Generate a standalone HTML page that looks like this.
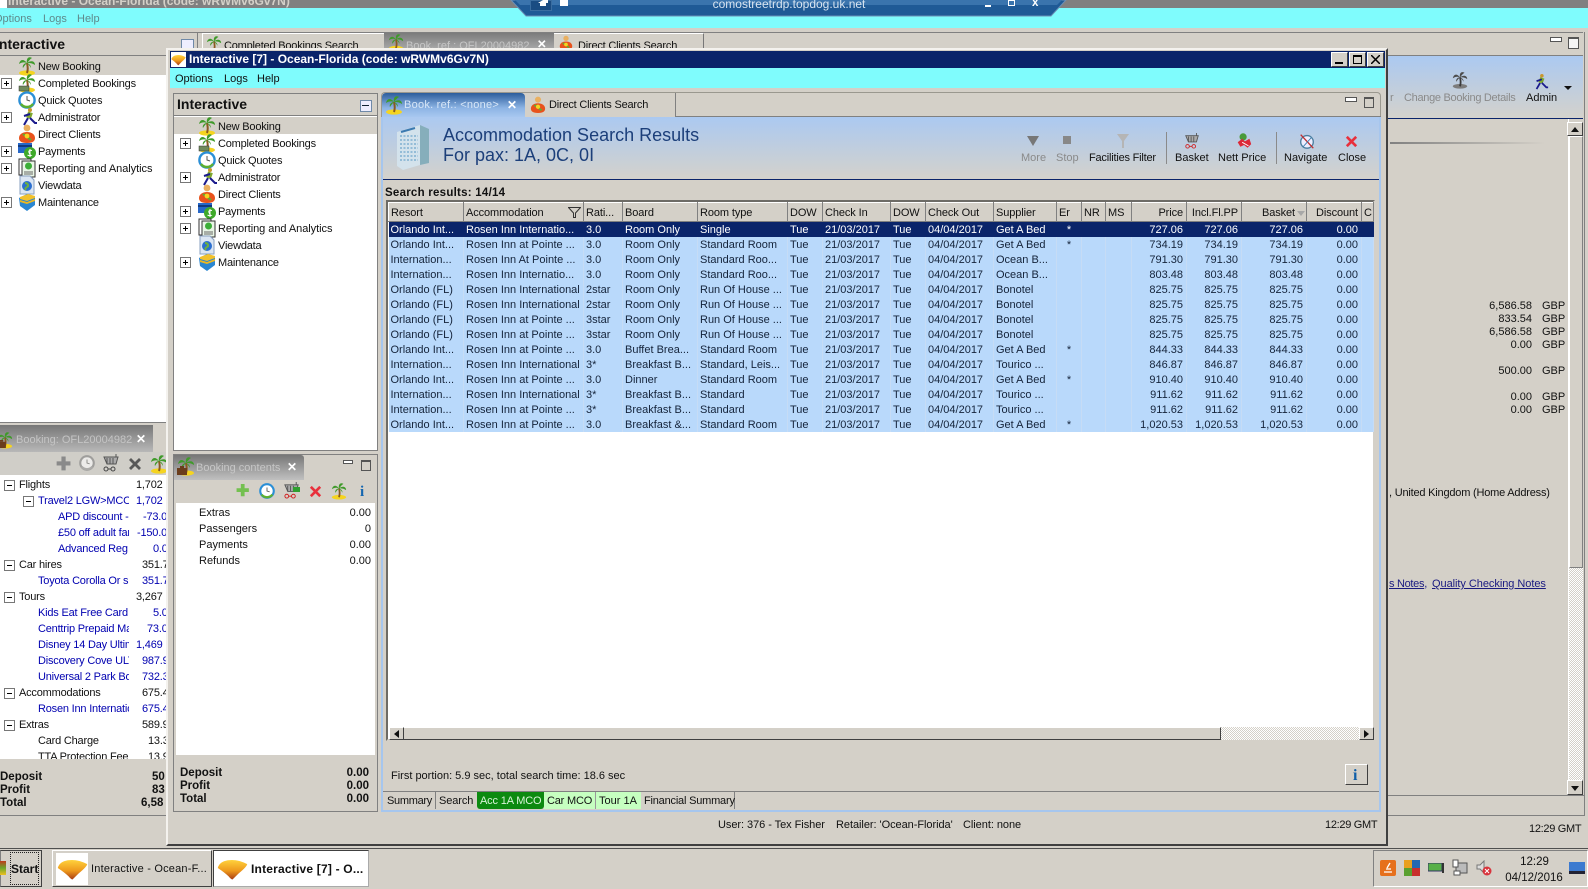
<!DOCTYPE html>
<html><head><meta charset="utf-8"><title>Interactive</title>
<style>
html,body{margin:0;padding:0;background:#d4d0c8}
#p{position:relative;width:1588px;height:889px;overflow:hidden;background:#d4d0c8;font:11px/14px "Liberation Sans",sans-serif;color:#111}
#p div,#p svg,#p table{position:absolute}
.t{white-space:nowrap;height:14px;margin-top:1px}
.b{font-weight:bold;font-size:11.5px}
.r{text-align:right}
.bl{color:#0000b0}
.gr{color:#8a8a8a}
.x{width:9px;height:9px;background:#fff;border:1px solid #777;box-sizing:content-box}
.x:before{content:"";position:absolute;left:2px;top:4px;width:5px;height:1px;background:#000}
.pl:after{content:"";position:absolute;left:4px;top:2px;width:1px;height:5px;background:#000}
.btn{background:#d4d0c8;border:1px solid;border-color:#fff #404040 #404040 #fff;box-sizing:border-box}
.dot{background:repeating-conic-gradient(#fff 0 25%,#d4d0c8 0 50%) 0 0/2px 2px}
.band{background:linear-gradient(#abc9f1,#d4d2cc)}
.tl{letter-spacing:-.2px}
table.g{border-collapse:collapse;table-layout:fixed;width:985px;left:388px;top:202px;font-size:11px}
.g th{height:16px;padding:2px 0 0 2px;font-weight:normal;text-align:left;background:#d4d0c8;border-right:1px solid #808080;border-left:1px solid #fff;border-bottom:1px solid #808080;border-top:1px solid #fff;white-space:nowrap;overflow:hidden;line-height:14px;letter-spacing:-.1px}
.g td{height:14px;padding:1px 0 0 2px;background:#b9d9fb;border-right:1px solid #c6dcf5;white-space:nowrap;overflow:hidden;line-height:14px;color:#14233a}
.g .n{text-align:right;padding:1px 3px 0 0}
.g th.n{padding:2px 3px 0 0}
.g .c{text-align:center;padding:1px 0 0 0}
.g tr.s td{background:#0a246a;color:#fff;border-right-color:#0a246a}
#tree .t{letter-spacing:-.2px}
</style></head><body><div id="p">
<svg width="0" height="0" style="position:absolute"><defs>
<linearGradient id="ig" x1="0" y1="0" x2="0" y2="1"><stop offset="0" stop-color="#ffd23c"/><stop offset=".55" stop-color="#ee9a1c"/><stop offset="1" stop-color="#a83c14"/></linearGradient>
<symbol id="palm" viewBox="0 0 18 20"><ellipse cx="9" cy="17" rx="8" ry="2.6" fill="#f5d420"/><path d="M9 7C10 11 10 14 9 17" stroke="#8a5a20" stroke-width="2" fill="none"/><path d="M9 7C5 2 2 4 1 8 4 6 6 6 9 7ZM9 7C8 2 11 0 14 2 12 3 11 5 9 7ZM9 7C13 4 17 5 17 9 14 7 12 7 9 7ZM9 7C6 7 4 10 5 12 6 10 8 8 9 7ZM9 7C12 8 13 10 13 12 12 10 10 8 9 7Z" fill="#3f9a2a"/></symbol>
<symbol id="palmb" viewBox="0 0 18 20"><use href="#palm"/><rect x="0" y="12" width="10" height="7" fill="#6a3d1c"/><rect x="3" y="10" width="4" height="2" fill="#6a3d1c"/></symbol>
<symbol id="cash" viewBox="0 0 18 20"><use href="#palm"/><rect x="1" y="13" width="10" height="5" fill="#6f8a5a" stroke="#333" stroke-width=".5"/></symbol>
<symbol id="clock" viewBox="0 0 18 18"><circle cx="9" cy="9" r="7.6" fill="#fff" stroke="#2b8fd6" stroke-width="2.4"/><path d="M3 13A7.600 7.600 0 0 0 15 13" stroke="#5cb030" stroke-width="2.4" fill="none"/><path d="M9 5V9L12 10" stroke="#555" stroke-width="1" fill="none"/></symbol>
<symbol id="run" viewBox="0 0 18 20"><circle cx="10" cy="3" r="2" fill="#c9952c"/><rect x="7" y="5" width="5" height="6" fill="#7fa92c" transform="rotate(20 9 8)"/><path d="M8 11L4 18M10 11L15 16H17M10 7L4 9" stroke="#1a1a8c" stroke-width="2" fill="none"/></symbol>
<symbol id="man" viewBox="0 0 18 20"><circle cx="9" cy="4" r="3.4" fill="#eab060"/><path d="M1 14C1 6 17 6 17 14C17 17 15 19 9 19C3 19 1 17 1 14Z" fill="#e8521c"/><path d="M5 10L13 16" stroke="#5cb030" stroke-width="2"/><circle cx="9" cy="12" r="2.400" fill="#f5d420"/></symbol>
<symbol id="pay" viewBox="0 0 18 20"><rect x="0" y="2" width="14" height="10" fill="#2868c8"/><rect x="0" y="4" width="14" height="2" fill="#103a80"/><circle cx="12" cy="12" r="6" fill="#3fa92a"/><path d="M14 9.500Q10 9 11 11.500T13 14.500Q11 15 9.500 14M12 8V16" stroke="#fff" stroke-width="1" fill="none"/></symbol>
<symbol id="rep" viewBox="0 0 18 20"><rect x="1" y="1" width="12" height="16" fill="#fff" stroke="#333"/><rect x="4" y="3" width="13" height="16" fill="#e9f5e6" stroke="#333"/><circle cx="10.500" cy="8" r="3.500" fill="#3cae38"/><path d="M6 14H15M6 16H15" stroke="#666"/></symbol>
<symbol id="globe" viewBox="0 0 18 20"><path d="M2 1H12L16 5V19H2Z" fill="#dbe6f3" stroke="#8aa0c0"/><circle cx="9" cy="11" r="5" fill="#2b6fd0"/><path d="M7 8C10 8 11 11 9 12S7 14 8 15" stroke="#6cb040" stroke-width="2" fill="none"/></symbol>
<symbol id="mnt" viewBox="0 0 18 20"><path d="M1 6L9 2L17 5V13L9 19L2 14Z" fill="#2a86d2"/><path d="M2 5L10 2L17 4V6L9 9L2 7Z" fill="#f1c12c"/><path d="M2 8L9 10L17 7V9L9 12L2 10Z" fill="#edb820"/></symbol>
<symbol id="hotel" viewBox="0 0 34 48"><path d="M1 9L24 2V42L7 47L1 43Z" fill="#d3e2ec"/><path d="M24 2L33 6V40L24 42Z" fill="#86aebb"/><path d="M4 13H22M4 17H22M4 21H22M4 25H22M4 29H22M4 33H22M4 37H22" stroke="#7fb0d0" stroke-width="1.500" stroke-dasharray="2 1.500"/><path d="M5 9L19 5" stroke="#3c7ab0" stroke-width="2"/></symbol>
<symbol id="del" viewBox="0 0 16 16"><path d="M2 4L4 2L8 6L12 2L14 4L10 8L14 12L12 14L8 10L4 14L2 12L6 8Z" fill="#e8303c"/></symbol>
<symbol id="cart" viewBox="0 0 18 18"><path d="M2 3H16L14 10H5ZM14 0V3" fill="#aaa" stroke="#555"/><path d="M5 4V10M8 4V10M11 4V10" stroke="#555"/><circle cx="4" cy="15" r="2" fill="none" stroke="#d02020"/><circle cx="11" cy="15" r="2" fill="none" stroke="#d02020"/><path d="M6 15H9" stroke="#d02020"/></symbol>
<symbol id="compass" viewBox="0 0 20 20"><circle cx="10" cy="11" r="7" fill="#eef" stroke="#4c7fa0" stroke-width="1.500"/><path d="M3 3L17 18" stroke="#c03030" stroke-width="1.500"/><path d="M6 16L15 6" stroke="#4080b0"/></symbol>
<symbol id="nett" viewBox="0 0 20 18"><circle cx="9" cy="5" r="4" fill="#4a9a3a"/><path d="M3 11L8 7L11 10L16 7L18 13L14 17L10 14L6 16Z" fill="#dc2838"/><path d="M8 11L15 15" stroke="#fff"/></symbol>
<symbol id="sun" viewBox="0 0 40 30" preserveAspectRatio="none"><path d="M1 13Q3 5 14 3Q26 1 39 8Q38 12 28 20Q22 26 20 28Q18 28 15 24Q10 19 1 13Z" fill="url(#ig)"/></symbol>
</defs></svg>

<!-- main window top -->
<div style="left:0;top:0;width:1588px;height:8px;background:#808080"></div>
<div class="t b" style="left:8px;top:-7px;color:#d4d0c8;font-size:12px;">Interactive - Ocean-Florida (code: wRWMv6Gv7N)</div>
<div style="left:0;top:0;width:7px;height:8px;background:#fff"></div>
<div style="left:0;top:8px;width:1588px;height:20px;background:#7ffcfd"></div>
<div class="t" style="left:-6px;top:11px;color:#5f8a8c">Options</div>
<div class="t" style="left:43px;top:11px;color:#5f8a8c">Logs</div>
<div class="t" style="left:77px;top:11px;color:#5f8a8c">Help</div>

<!-- RDP bar -->
<svg width="560" height="18" style="left:510px;top:0"><path d="M1 0L16 16H541L556 0Z" fill="#1f5a96" stroke="#6b8fb5"/><path d="M5 0H552L547 5H10Z" fill="#3a74ad"/></svg>
<div class="t" style="left:711px;top:-4px;width:156px;text-align:center;color:#d8e4f0;font-size:12px">comostreetrdp.topdog.uk.net</div>
<div style="left:530px;top:0;width:22px;height:11px;background:#1a4c82;border:1px solid #3a6da0;box-sizing:border-box"></div>
<svg width="10" height="6" style="left:538px;top:0"><path d="M0 3L5 0H10V3H8V6H2V3Z" fill="#fff"/></svg>
<div style="left:560px;top:0;width:8px;height:6px;background:#fff"></div>
<div style="left:985px;top:5px;width:6px;height:2px;background:#fff"></div>
<div style="left:1008px;top:0;width:7px;height:6px;border:1px solid #fff;box-sizing:border-box"></div>
<div class="t b" style="left:1032px;top:-5px;color:#fff">x</div>

<!-- main panel behind -->
<div style="left:0;top:32px;width:1583px;height:1px;background:#808080"></div>
<div class="t b" style="left:-5px;top:36px;font-size:14px;color:#111">Interactive</div>
<div style="left:181px;top:39px;width:11px;height:10px;border:1px solid #6f89a8;background:#eef"></div>
<div style="left:197px;top:33px;width:1px;height:15px;background:#808080"></div>
<div style="left:202px;top:33px;width:182px;height:15px;border-left:1px solid #fff;border-top:1px solid #fff;box-sizing:border-box;overflow:hidden"><svg width="16" height="18" style="left:3px;top:1px"><use href="#palm"/></svg></div>
<div class="t" style="left:224px;top:38px;letter-spacing:-.2px">Completed Bookings Search</div>
<div style="left:384px;top:33px;width:170px;height:15px;background:linear-gradient(#7c7c7c,#a5a5a5)"></div>
<svg width="16" height="18" style="left:388px;top:33px"><use href="#palm"/></svg>
<div class="t" style="left:406px;top:38px;color:#c6c6c6">Book. ref.: OFL20004982</div>
<div class="t b" style="left:537px;top:37px;color:#fff">✕</div>
<div style="left:554px;top:33px;width:150px;height:15px;border-right:1px solid #777;border-top:1px solid #fff;box-sizing:border-box"></div>
<svg width="14" height="16" style="left:559px;top:35px"><use href="#man"/></svg>
<div class="t" style="left:578px;top:38px;letter-spacing:-.2px">Direct Clients Search</div>
<div style="left:0;top:55px;width:166px;height:1px;background:#808080"></div>
<div style="left:0;top:56px;width:166px;height:367px;background:#fff"></div>
<div style="left:0;top:56px;width:166px;height:19px;background:#d4d0c8"></div>

<svg width="18" height="20" style="left:18px;top:56px"><use href="#palm"/></svg><div class="t tl" style="left:38px;top:59px">New Booking</div>
<div class="x pl" style="left:1px;top:78px"></div><svg width="18" height="20" style="left:18px;top:73px"><use href="#cash"/></svg><div class="t tl" style="left:38px;top:76px">Completed Bookings</div>
<svg width="18" height="18" style="left:18px;top:91px"><use href="#clock"/></svg><div class="t tl" style="left:38px;top:93px">Quick Quotes</div>
<div class="x pl" style="left:1px;top:112px"></div><svg width="18" height="20" style="left:20px;top:107px"><use href="#run"/></svg><div class="t tl" style="left:38px;top:110px">Administrator</div>
<svg width="18" height="20" style="left:18px;top:124px"><use href="#man"/></svg><div class="t tl" style="left:38px;top:127px">Direct Clients</div>
<div class="x pl" style="left:1px;top:146px"></div><svg width="18" height="20" style="left:18px;top:141px"><use href="#pay"/></svg><div class="t tl" style="left:38px;top:144px">Payments</div>
<div class="x pl" style="left:1px;top:163px"></div><svg width="18" height="20" style="left:18px;top:158px"><use href="#rep"/></svg><div class="t" style="left:38px;top:161px;letter-spacing:-.05px">Reporting and Analytics</div>
<svg width="18" height="20" style="left:18px;top:175px"><use href="#globe"/></svg><div class="t tl" style="left:38px;top:178px">Viewdata</div>
<div class="x pl" style="left:1px;top:197px"></div><svg width="18" height="20" style="left:18px;top:192px"><use href="#mnt"/></svg><div class="t tl" style="left:38px;top:195px">Maintenance</div>

<!-- main left booking panel -->
<div style="left:0;top:422px;width:166px;height:1px;background:#808080"></div>
<div style="left:0;top:425px;width:153px;height:27px;background:linear-gradient(#777,#b8b8b8)"></div>
<svg width="16" height="20" style="left:-3px;top:430px"><use href="#palmb"/></svg>
<div class="t" style="left:16px;top:432px;color:#c4c4c4">Booking: OFL20004982</div>
<div class="t b" style="left:136px;top:431px;color:#fff;font-size:12px">✕</div>
<div style="left:0;top:452px;width:166px;height:23px;background:#d0cec8"></div>
<div class="t b gr" style="left:56px;top:456px;font-size:18px">✚</div>
<svg width="16" height="16" style="left:79px;top:455px;opacity:.6;filter:grayscale(1)"><use href="#clock"/></svg>
<svg width="18" height="18" style="left:102px;top:454px;filter:grayscale(1)"><use href="#cart"/></svg>
<svg width="16" height="16" style="left:127px;top:456px;filter:grayscale(1)"><use href="#del"/></svg>
<svg width="18" height="20" style="left:150px;top:454px"><use href="#palm"/></svg>
<div id="tree" style="left:0;top:475px;width:166px;height:284px;background:#fff;overflow:hidden">
<div class="t" style="left:19px;top:2px">Flights</div><div class="t" style="left:136px;top:2px">1,702</div>
<div class="x" style="left:4px;top:5px"></div>
<div class="x" style="left:23px;top:21px"></div><div class="t bl" style="left:38px;top:18px;width:91px;overflow:hidden">Travel2 LGW&gt;MCO</div><div class="t bl" style="left:136px;top:18px">1,702</div>
<div class="t bl" style="left:58px;top:34px;width:71px;overflow:hidden">APD discount - Adult</div><div class="t bl" style="left:143px;top:34px">-73.00</div>
<div class="t bl" style="left:58px;top:50px;width:71px;overflow:hidden">£50 off adult fare</div><div class="t bl" style="left:137px;top:50px">-150.00</div>
<div class="t bl" style="left:58px;top:66px;width:71px;overflow:hidden">Advanced Reg</div><div class="t bl" style="left:153px;top:66px">0.00</div>
<div class="x" style="left:4px;top:85px"></div><div class="t" style="left:19px;top:82px">Car hires</div><div class="t" style="left:142px;top:82px">351.70</div>
<div class="t bl" style="left:38px;top:98px;width:91px;overflow:hidden">Toyota Corolla Or similar</div><div class="t bl" style="left:142px;top:98px">351.70</div>
<div class="x" style="left:4px;top:117px"></div><div class="t" style="left:19px;top:114px">Tours</div><div class="t" style="left:136px;top:114px">3,267</div>
<div class="t bl" style="left:38px;top:130px;width:91px;overflow:hidden">Kids Eat Free Card</div><div class="t bl" style="left:153px;top:130px">5.00</div>
<div class="t bl" style="left:38px;top:146px;width:91px;overflow:hidden">Centtrip Prepaid MasterCard</div><div class="t bl" style="left:147px;top:146px">73.00</div>
<div class="t bl" style="left:38px;top:162px;width:91px;overflow:hidden">Disney 14 Day Ultimate</div><div class="t bl" style="left:136px;top:162px">1,469</div>
<div class="t bl" style="left:38px;top:178px;width:91px;overflow:hidden">Discovery Cove ULTIMATE</div><div class="t bl" style="left:142px;top:178px">987.90</div>
<div class="t bl" style="left:38px;top:194px;width:91px;overflow:hidden">Universal 2 Park Bonus</div><div class="t bl" style="left:142px;top:194px">732.30</div>
<div class="x" style="left:4px;top:213px"></div><div class="t" style="left:19px;top:210px">Accommodations</div><div class="t" style="left:142px;top:210px">675.40</div>
<div class="t bl" style="left:38px;top:226px;width:91px;overflow:hidden">Rosen Inn International</div><div class="t bl" style="left:142px;top:226px">675.40</div>
<div class="x" style="left:4px;top:245px"></div><div class="t" style="left:19px;top:242px">Extras</div><div class="t" style="left:142px;top:242px">589.90</div>
<div class="t" style="left:38px;top:258px">Card Charge</div><div class="t" style="left:148px;top:258px">13.30</div>
<div class="t" style="left:38px;top:274px">TTA Protection Fee</div><div class="t" style="left:148px;top:274px">13.90</div>
</div>
<div class="t b" style="left:0;top:769px">Deposit</div><div class="t b" style="left:152px;top:769px;width:14px;overflow:hidden">50</div>
<div class="t b" style="left:0;top:782px">Profit</div><div class="t b" style="left:152px;top:782px;width:14px;overflow:hidden">83</div>
<div class="t b" style="left:0;top:795px">Total</div><div class="t b" style="left:141px;top:795px;width:25px;overflow:hidden">6,58</div>
<div style="left:0;top:815px;width:166px;height:1px;background:#808080"></div>

<!-- main right -->
<div class="band" style="left:1388px;top:56px;width:195px;height:62px"></div>
<div style="left:1388px;top:118px;width:195px;height:1px;background:#0a246a"></div>
<div style="left:1388px;top:55px;width:195px;height:1px;background:#808080"></div>
<div style="left:1550px;top:37px;width:10px;height:3px;border:1px solid #555;background:#fff"></div>
<div style="left:1568px;top:37px;width:9px;height:9px;border:1px solid #555;border-top-width:2px;background:#f5f5f5"></div>
<div class="t gr" style="left:1390px;top:90px">r</div>
<svg width="18" height="18" style="left:1451px;top:71px;filter:grayscale(1) brightness(.6)"><use href="#palm"/></svg>
<div class="t gr" style="left:1404px;top:90px;letter-spacing:-.3px">Change Booking Details</div>
<svg width="16" height="18" style="left:1533px;top:73px"><use href="#run"/></svg>
<div class="t" style="left:1526px;top:90px">Admin</div>
<svg width="8" height="5" style="left:1564px;top:86px"><path d="M0 0H8L4 4Z" fill="#111"/></svg>
<div style="left:1390px;top:142px;width:155px;height:2px;background:linear-gradient(90deg,#808080,#d4d0c8)"></div>
<div style="left:1568px;top:119px;width:1px;height:677px;background:#fff"></div>
<div class="dot" style="left:1569px;top:136px;width:14px;height:645px"></div>
<div class="btn" style="left:1567px;top:122px;width:16px;height:14px"></div>
<svg width="8" height="5" style="left:1571px;top:127px"><path d="M0 5H8L4 0Z" fill="#111"/></svg>
<div style="left:1569px;top:136px;width:14px;height:432px;background:#d4d0c8;border:1px solid;border-color:#fff #808080 #808080 #fff;box-sizing:border-box"></div>
<div class="btn" style="left:1567px;top:780px;width:16px;height:15px"></div>
<svg width="8" height="5" style="left:1571px;top:786px"><path d="M0 0H8L4 5Z" fill="#111"/></svg>
<div style="left:1388px;top:795px;width:196px;height:1px;background:#808080"></div>
<div style="left:1388px;top:815px;width:197px;height:1px;background:#808080"></div>
<div style="left:1584px;top:32px;width:1px;height:784px;background:#808080"></div>
<div class="t r" style="left:1470px;top:298px;width:62px">6,586.58</div><div class="t" style="left:1542px;top:298px">GBP</div>
<div class="t r" style="left:1470px;top:311px;width:62px">833.54</div><div class="t" style="left:1542px;top:311px">GBP</div>
<div class="t r" style="left:1470px;top:324px;width:62px">6,586.58</div><div class="t" style="left:1542px;top:324px">GBP</div>
<div class="t r" style="left:1470px;top:337px;width:62px">0.00</div><div class="t" style="left:1542px;top:337px">GBP</div>
<div class="t r" style="left:1470px;top:363px;width:62px">500.00</div><div class="t" style="left:1542px;top:363px">GBP</div>
<div class="t r" style="left:1470px;top:389px;width:62px">0.00</div><div class="t" style="left:1542px;top:389px">GBP</div>
<div class="t r" style="left:1470px;top:402px;width:62px">0.00</div><div class="t" style="left:1542px;top:402px">GBP</div>
<div class="t" style="left:1389px;top:485px;letter-spacing:-.2px">, United Kingdom (Home Address)</div>
<div class="t" style="left:1389px;top:576px;color:#1a1a80;letter-spacing:-.3px"><span style="text-decoration:underline">s Notes</span>,</div>
<div class="t" style="left:1432px;top:576px;color:#1a1a80;text-decoration:underline;letter-spacing:-.05px">Quality Checking Notes</div>
<div class="t" style="left:1529px;top:821px;letter-spacing:-.3px">12:29 GMT</div>

<!-- dialog -->
<div style="left:166px;top:48px;width:1222px;height:798px;background:#d4d0c8;border-left:2px solid #f4f2ee;border-top:2px solid #f4f2ee;border-right:2px solid #404040;border-bottom:2px solid #404040;box-sizing:border-box"></div>
<div style="left:170px;top:51px;width:1215px;height:17px;background:#0a246a"></div>
<div style="left:171px;top:52px;width:15px;height:15px;background:#fff"></div>
<svg width="15" height="12" style="left:171px;top:54px"><use href="#sun"/></svg>
<div class="t b" style="left:189px;top:51px;color:#fff;font-size:12px">Interactive [7] - Ocean-Florida (code: wRWMv6Gv7N)</div>
<div class="btn" style="left:1331px;top:52px;width:17px;height:15px"></div><div style="left:1335px;top:62px;width:8px;height:2px;background:#000"></div>
<div class="btn" style="left:1349px;top:52px;width:17px;height:15px"></div><div style="left:1353px;top:55px;width:9px;height:9px;border:1px solid #000;border-top-width:2px;box-sizing:border-box"></div>
<div class="btn" style="left:1367px;top:52px;width:17px;height:15px"></div>
<svg width="9" height="9" style="left:1371px;top:55px"><path d="M0 0L9 9M9 0L0 9" stroke="#000" stroke-width="1.500"/></svg>
<div style="left:170px;top:68px;width:1215px;height:20px;background:#7ffcfd"></div>
<div class="t" style="left:175px;top:71px">Options</div>
<div class="t" style="left:224px;top:71px">Logs</div>
<div class="t" style="left:257px;top:71px">Help</div>

<!-- dialog left tree -->
<div style="left:173px;top:93px;width:205px;height:358px;border:1px solid #808080;box-sizing:border-box;background:#fff"></div>
<div style="left:174px;top:94px;width:203px;height:22px;background:#d4d0c8;border-bottom:1px solid #808080;box-sizing:border-box"></div>
<div class="t b" style="left:177px;top:96px;font-size:14px">Interactive</div>
<div style="left:360px;top:100px;width:10px;height:10px;border:1px solid #6f89a8;background:#eef"></div>
<div style="left:362px;top:105px;width:7px;height:1px;background:#123"></div>
<div style="left:174px;top:117px;width:203px;height:17px;background:#d4d0c8"></div>

<svg width="18" height="20" style="left:198px;top:116px"><use href="#palm"/></svg><div class="t tl" style="left:218px;top:119px">New Booking</div>
<div class="x pl" style="left:180px;top:138px"></div><svg width="18" height="20" style="left:198px;top:133px"><use href="#cash"/></svg><div class="t tl" style="left:218px;top:136px">Completed Bookings</div>
<svg width="18" height="18" style="left:198px;top:151px"><use href="#clock"/></svg><div class="t tl" style="left:218px;top:153px">Quick Quotes</div>
<div class="x pl" style="left:180px;top:172px"></div><svg width="18" height="20" style="left:200px;top:167px"><use href="#run"/></svg><div class="t tl" style="left:218px;top:170px">Administrator</div>
<svg width="18" height="20" style="left:198px;top:184px"><use href="#man"/></svg><div class="t tl" style="left:218px;top:187px">Direct Clients</div>
<div class="x pl" style="left:180px;top:206px"></div><svg width="18" height="20" style="left:198px;top:201px"><use href="#pay"/></svg><div class="t tl" style="left:218px;top:204px">Payments</div>
<div class="x pl" style="left:180px;top:223px"></div><svg width="18" height="20" style="left:198px;top:218px"><use href="#rep"/></svg><div class="t" style="left:218px;top:221px;letter-spacing:-.05px">Reporting and Analytics</div>
<svg width="18" height="20" style="left:198px;top:235px"><use href="#globe"/></svg><div class="t tl" style="left:218px;top:238px">Viewdata</div>
<div class="x pl" style="left:180px;top:257px"></div><svg width="18" height="20" style="left:198px;top:252px"><use href="#mnt"/></svg><div class="t tl" style="left:218px;top:255px">Maintenance</div>

<!-- booking contents -->
<div style="left:173px;top:454px;width:205px;height:358px;border:1px solid #808080;box-sizing:border-box"></div>
<div style="left:174px;top:455px;width:130px;height:25px;background:linear-gradient(#777,#c0c0c0);border-top-right-radius:3px"></div>
<svg width="18" height="20" style="left:177px;top:456px"><use href="#palmb"/></svg>
<div class="t" style="left:196px;top:460px;color:#c6c6c6">Booking contents</div>
<div class="t b" style="left:287px;top:459px;color:#fff;font-size:12px">✕</div>
<div style="left:343px;top:460px;width:8px;height:2px;border:1px solid #555;background:#fff"></div>
<div style="left:361px;top:460px;width:8px;height:8px;border:1px solid #555;border-top-width:2px"></div>
<div style="left:176px;top:480px;width:199px;height:23px;background:#d4d0c8"></div>
<div class="t b" style="left:236px;top:484px;font-size:16px;color:#74c050">✚</div>
<svg width="16" height="16" style="left:259px;top:483px"><use href="#clock"/></svg>
<svg width="17" height="17" style="left:283px;top:482px"><use href="#cart"/></svg>
<div style="left:293px;top:487px;width:7px;height:5px;background:#30a030"></div>
<svg width="15" height="15" style="left:308px;top:484px"><use href="#del"/></svg>
<svg width="16" height="18" style="left:331px;top:482px"><use href="#palm"/></svg>
<div class="t" style="left:360px;top:483px;color:#1466b0;font:bold 15px 'Liberation Serif',serif">i</div>
<div style="left:176px;top:503px;width:199px;height:252px;background:#fff"></div>
<div class="t" style="left:199px;top:505px">Extras</div><div class="t r" style="left:320px;top:505px;width:51px">0.00</div>
<div class="t" style="left:199px;top:521px">Passengers</div><div class="t r" style="left:320px;top:521px;width:51px">0</div>
<div class="t" style="left:199px;top:537px">Payments</div><div class="t r" style="left:320px;top:537px;width:51px">0.00</div>
<div class="t" style="left:199px;top:553px">Refunds</div><div class="t r" style="left:320px;top:553px;width:51px">0.00</div>
<div class="t b" style="left:180px;top:765px">Deposit</div><div class="t b r" style="left:320px;top:765px;width:49px">0.00</div>
<div class="t b" style="left:180px;top:778px">Profit</div><div class="t b r" style="left:320px;top:778px;width:49px">0.00</div>
<div class="t b" style="left:180px;top:791px">Total</div><div class="t b r" style="left:320px;top:791px;width:49px">0.00</div>

<!-- dialog right panel -->
<div style="left:381px;top:92px;width:1000px;height:26px;border:1px solid #9a988f;border-bottom:0;box-sizing:border-box;border-radius:4px 4px 0 0"></div>
<div style="left:381px;top:117px;width:1000px;height:695px;border:2px solid #a6c6ee;border-top:0;box-sizing:border-box"></div>
<div style="left:382px;top:93px;width:143px;height:25px;background:linear-gradient(#2c5d9c,#8db4e4 60%,#abc9f1);border-radius:4px 4px 0 0"></div>
<svg width="18" height="20" style="left:385px;top:95px"><use href="#palm"/></svg>
<div class="t" style="left:404px;top:97px;color:#d7e6f7;letter-spacing:.25px">Book. ref.: &lt;none&gt;</div>
<div class="t b" style="left:507px;top:97px;color:#fff;font-size:12px">✕</div>
<div style="left:526px;top:93px;width:150px;height:24px;border-right:1px solid #808080;box-sizing:border-box"></div>
<svg width="16" height="18" style="left:530px;top:96px"><use href="#man"/></svg>
<div class="t" style="left:549px;top:97px;letter-spacing:-.2px">Direct Clients Search</div>
<div style="left:676px;top:116px;width:705px;height:1px;background:#808080"></div>
<div style="left:1345px;top:97px;width:10px;height:3px;border:1px solid #555;background:#fff"></div>
<div style="left:1364px;top:97px;width:8px;height:8px;border:1px solid #555;border-top-width:2px"></div>

<div class="band" style="left:383px;top:117px;width:996px;height:62px"></div>
<div style="left:383px;top:179px;width:996px;height:1px;background:#0a246a"></div>
<svg width="36" height="48" style="left:395px;top:123px"><use href="#hotel"/></svg>
<div class="t" style="left:443px;top:124px;height:20px;line-height:20px;font-size:18px;color:#1c3f7a">Accommodation Search Results</div>
<div class="t" style="left:443px;top:144px;height:20px;line-height:20px;font-size:18px;color:#1c3f7a">For pax: 1A, 0C, 0I</div>

<svg width="14" height="12" style="left:1026px;top:135px"><path d="M1 1H13L7 11Z" fill="#777"/></svg>
<div class="t gr" style="left:1021px;top:150px">More</div>
<div style="left:1063px;top:136px;width:8px;height:8px;background:#888"></div>
<div class="t gr" style="left:1056px;top:150px">Stop</div>
<svg width="14" height="16" style="left:1116px;top:133px"><path d="M1 1H13L8 8V15H6V8Z" fill="#b5b5b5"/></svg>
<div class="t" style="left:1089px;top:150px;letter-spacing:-.2px">Facilities Filter</div>
<div style="left:1166px;top:132px;width:1px;height:32px;background:#8a8a8a"></div>
<svg width="16" height="16" style="left:1184px;top:133px"><use href="#cart"/></svg>
<div class="t" style="left:1175px;top:150px">Basket</div>
<svg width="18" height="17" style="left:1235px;top:132px"><use href="#nett"/></svg>
<div class="t" style="left:1218px;top:150px">Nett Price</div>
<div style="left:1276px;top:132px;width:1px;height:32px;background:#8a8a8a"></div>
<svg width="18" height="18" style="left:1298px;top:132px"><use href="#compass"/></svg>
<div class="t" style="left:1284px;top:150px">Navigate</div>
<svg width="15" height="15" style="left:1344px;top:134px"><use href="#del"/></svg>
<div class="t" style="left:1338px;top:150px">Close</div>

<div class="t b" style="left:385px;top:185px;letter-spacing:.25px">Search results: 14/14</div>

<div style="left:386px;top:200px;width:989px;height:541px;background:#fff;border:2px solid;border-color:#6d6b66 #d4d0c8 #d4d0c8 #6d6b66;box-sizing:border-box"></div>
<table class="g"><colgroup><col style="width:75px"><col style="width:120px"><col style="width:39px"><col style="width:75px"><col style="width:90px"><col style="width:35px"><col style="width:68px"><col style="width:35px"><col style="width:68px"><col style="width:63px"><col style="width:25px"><col style="width:24px"><col style="width:26px"><col style="width:55px"><col style="width:55px"><col style="width:65px"><col style="width:55px"><col style="width:12px"></colgroup>
<tr><th>Resort</th><th>Accommodation</th><th>Rati...</th><th>Board</th><th>Room type</th><th>DOW</th><th>Check In</th><th>DOW</th><th>Check Out</th><th>Supplier</th><th>Er</th><th>NR</th><th>MS</th><th class="n">Price</th><th class="n">Incl.Fl.PP</th><th class="n" style="padding-right:11px">Basket</th><th class="n">Discount</th><th>C</th></tr>
<tr class="s"><td>Orlando Int...</td><td>Rosen Inn Internatio...</td><td>3.0</td><td>Room Only</td><td>Single</td><td>Tue</td><td>21/03/2017</td><td>Tue</td><td>04/04/2017</td><td>Get A Bed</td><td class="c">*</td><td></td><td></td><td class="n">727.06</td><td class="n">727.06</td><td class="n">727.06</td><td class="n">0.00</td><td></td></tr>
<tr><td>Orlando Int...</td><td>Rosen Inn at Pointe ...</td><td>3.0</td><td>Room Only</td><td>Standard Room</td><td>Tue</td><td>21/03/2017</td><td>Tue</td><td>04/04/2017</td><td>Get A Bed</td><td class="c">*</td><td></td><td></td><td class="n">734.19</td><td class="n">734.19</td><td class="n">734.19</td><td class="n">0.00</td><td></td></tr>
<tr><td>Internation...</td><td>Rosen Inn At Pointe ...</td><td>3.0</td><td>Room Only</td><td>Standard Roo...</td><td>Tue</td><td>21/03/2017</td><td>Tue</td><td>04/04/2017</td><td>Ocean B...</td><td></td><td></td><td></td><td class="n">791.30</td><td class="n">791.30</td><td class="n">791.30</td><td class="n">0.00</td><td></td></tr>
<tr><td>Internation...</td><td>Rosen Inn Internatio...</td><td>3.0</td><td>Room Only</td><td>Standard Roo...</td><td>Tue</td><td>21/03/2017</td><td>Tue</td><td>04/04/2017</td><td>Ocean B...</td><td></td><td></td><td></td><td class="n">803.48</td><td class="n">803.48</td><td class="n">803.48</td><td class="n">0.00</td><td></td></tr>
<tr><td>Orlando (FL)</td><td>Rosen Inn International</td><td>2star</td><td>Room Only</td><td>Run Of House ...</td><td>Tue</td><td>21/03/2017</td><td>Tue</td><td>04/04/2017</td><td>Bonotel</td><td></td><td></td><td></td><td class="n">825.75</td><td class="n">825.75</td><td class="n">825.75</td><td class="n">0.00</td><td></td></tr>
<tr><td>Orlando (FL)</td><td>Rosen Inn International</td><td>2star</td><td>Room Only</td><td>Run Of House ...</td><td>Tue</td><td>21/03/2017</td><td>Tue</td><td>04/04/2017</td><td>Bonotel</td><td></td><td></td><td></td><td class="n">825.75</td><td class="n">825.75</td><td class="n">825.75</td><td class="n">0.00</td><td></td></tr>
<tr><td>Orlando (FL)</td><td>Rosen Inn at Pointe ...</td><td>3star</td><td>Room Only</td><td>Run Of House ...</td><td>Tue</td><td>21/03/2017</td><td>Tue</td><td>04/04/2017</td><td>Bonotel</td><td></td><td></td><td></td><td class="n">825.75</td><td class="n">825.75</td><td class="n">825.75</td><td class="n">0.00</td><td></td></tr>
<tr><td>Orlando (FL)</td><td>Rosen Inn at Pointe ...</td><td>3star</td><td>Room Only</td><td>Run Of House ...</td><td>Tue</td><td>21/03/2017</td><td>Tue</td><td>04/04/2017</td><td>Bonotel</td><td></td><td></td><td></td><td class="n">825.75</td><td class="n">825.75</td><td class="n">825.75</td><td class="n">0.00</td><td></td></tr>
<tr><td>Orlando Int...</td><td>Rosen Inn at Pointe ...</td><td>3.0</td><td>Buffet Brea...</td><td>Standard Room</td><td>Tue</td><td>21/03/2017</td><td>Tue</td><td>04/04/2017</td><td>Get A Bed</td><td class="c">*</td><td></td><td></td><td class="n">844.33</td><td class="n">844.33</td><td class="n">844.33</td><td class="n">0.00</td><td></td></tr>
<tr><td>Internation...</td><td>Rosen Inn International</td><td>3*</td><td>Breakfast B...</td><td>Standard, Leis...</td><td>Tue</td><td>21/03/2017</td><td>Tue</td><td>04/04/2017</td><td>Tourico ...</td><td></td><td></td><td></td><td class="n">846.87</td><td class="n">846.87</td><td class="n">846.87</td><td class="n">0.00</td><td></td></tr>
<tr><td>Orlando Int...</td><td>Rosen Inn at Pointe ...</td><td>3.0</td><td>Dinner</td><td>Standard Room</td><td>Tue</td><td>21/03/2017</td><td>Tue</td><td>04/04/2017</td><td>Get A Bed</td><td class="c">*</td><td></td><td></td><td class="n">910.40</td><td class="n">910.40</td><td class="n">910.40</td><td class="n">0.00</td><td></td></tr>
<tr><td>Internation...</td><td>Rosen Inn International</td><td>3*</td><td>Breakfast B...</td><td>Standard</td><td>Tue</td><td>21/03/2017</td><td>Tue</td><td>04/04/2017</td><td>Tourico ...</td><td></td><td></td><td></td><td class="n">911.62</td><td class="n">911.62</td><td class="n">911.62</td><td class="n">0.00</td><td></td></tr>
<tr><td>Internation...</td><td>Rosen Inn at Pointe ...</td><td>3*</td><td>Breakfast B...</td><td>Standard</td><td>Tue</td><td>21/03/2017</td><td>Tue</td><td>04/04/2017</td><td>Tourico ...</td><td></td><td></td><td></td><td class="n">911.62</td><td class="n">911.62</td><td class="n">911.62</td><td class="n">0.00</td><td></td></tr>
<tr><td>Orlando Int...</td><td>Rosen Inn at Pointe ...</td><td>3.0</td><td>Breakfast &amp;...</td><td>Standard Room</td><td>Tue</td><td>21/03/2017</td><td>Tue</td><td>04/04/2017</td><td>Get A Bed</td><td class="c">*</td><td></td><td></td><td class="n">1,020.53</td><td class="n">1,020.53</td><td class="n">1,020.53</td><td class="n">0.00</td><td></td></tr>
</table>
<svg width="13" height="11" style="left:568px;top:207px"><path d="M.5.5H12.500L7.500 6V10.500H5.500V6Z" fill="none" stroke="#333"/></svg>
<svg width="8" height="5" style="left:1297px;top:211px"><path d="M0 0H8L4 5Z" fill="#a8a8a8"/></svg>

<!-- h scrollbar -->
<div class="dot" style="left:389px;top:727px;width:985px;height:13px"></div>
<div style="left:389px;top:727px;width:832px;height:13px;background:#d4d0c8;border:1px solid;border-color:#fff #404040 #404040 #fff;box-sizing:border-box"></div>
<div class="btn" style="left:389px;top:727px;width:15px;height:13px"></div>
<svg width="5" height="8" style="left:394px;top:730px"><path d="M5 0V8L0 4Z" fill="#111"/></svg>
<div class="btn" style="left:1359px;top:727px;width:15px;height:13px"></div>
<svg width="5" height="8" style="left:1364px;top:730px"><path d="M0 0V8L5 4Z" fill="#111"/></svg>

<div class="t" style="left:391px;top:768px">First portion: 5.9 sec, total search time: 18.6 sec</div>
<div class="btn" style="left:1345px;top:764px;width:23px;height:21px"></div>
<div class="t" style="left:1353px;top:766px;color:#0f5ea8;font:bold 16px 'Liberation Serif',serif">i</div>
<div style="left:383px;top:791px;width:996px;height:1px;background:#808080"></div>

<div style="left:385px;top:792px;width:51px;height:17px;border-right:1px solid #808080;box-sizing:border-box"></div><div class="t" style="left:387px;top:793px;letter-spacing:-.3px">Summary</div>
<div style="left:436px;top:792px;width:41px;height:17px"></div><div class="t" style="left:439px;top:793px;letter-spacing:-.1px">Search</div>
<div style="left:477px;top:792px;width:67px;height:17px;background:#0c8a10;border-radius:0 0 3px 3px"></div><div class="t" style="left:480px;top:793px;color:#d8f4d8;letter-spacing:-.15px">Acc 1A MCO</div>
<div style="left:544px;top:792px;width:51px;height:17px;background:#c6ffc0"></div><div class="t" style="left:547px;top:793px;letter-spacing:-.2px">Car MCO</div>
<div style="left:595px;top:792px;width:46px;height:17px;background:#c6ffc0;border-left:1px solid #9a9a9a;box-sizing:border-box"></div><div class="t" style="left:599px;top:793px">Tour 1A</div>
<div style="left:641px;top:792px;width:94px;height:17px;border-right:1px solid #808080;box-sizing:border-box"></div><div class="t" style="left:644px;top:793px;letter-spacing:-.2px">Financial Summary</div>

<div class="t" style="left:718px;top:817px;letter-spacing:-.05px">User: 376 - Tex Fisher</div>
<div class="t" style="left:836px;top:817px;letter-spacing:-.05px">Retailer: 'Ocean-Florida'</div>
<div class="t" style="left:963px;top:817px;letter-spacing:-.05px">Client: none</div>
<div class="t" style="left:1325px;top:817px;letter-spacing:-.3px">12:29 GMT</div>

<!-- taskbar -->
<div style="left:0;top:846px;width:166px;height:2px;background:#d4d0c8"></div>
<div style="left:0;top:848px;width:1588px;height:1px;background:#4f4f4f"></div>
<div style="left:0;top:849px;width:1588px;height:40px;background:#d4d0c8"></div>
<div style="left:0;top:850px;width:42px;height:37px;background:#d4d0c8;border:1px solid;border-color:#404040 #404040 #404040 #808080;box-sizing:border-box"></div>
<div style="left:10px;top:852px;width:29px;height:33px;border:1px dotted #222;box-sizing:border-box"></div>
<div class="t b" style="left:11px;top:861px;font-size:12px">Start</div>
<div style="left:-2px;top:861px;width:8px;height:14px;background:linear-gradient(#c03a1c,#6aa62c 50%,#f0c020)"></div>
<div style="left:52px;top:850px;width:160px;height:37px;background:#d4d0c8;border:1px solid;border-color:#fff #404040 #404040 #fff;box-sizing:border-box"></div>
<div style="left:56px;top:853px;width:32px;height:32px;background:#fff"></div>
<svg width="31" height="23" style="left:57px;top:858px"><use href="#sun"/></svg>
<div class="t" style="left:91px;top:861px;letter-spacing:.2px">Interactive - Ocean-F...</div>
<div style="left:213px;top:850px;width:156px;height:37px;background:#fff;border:1px solid;border-color:#404040 #aaa #aaa #404040;box-sizing:border-box"></div>
<svg width="31" height="23" style="left:217px;top:858px"><use href="#sun"/></svg>
<div class="t b" style="left:251px;top:861px;font-size:12px;letter-spacing:.2px">Interactive [7] - O...</div>
<div style="left:1373px;top:850px;width:215px;height:37px;border:1px solid;border-color:#808080 #fff #fff #808080;box-sizing:border-box"></div>
<svg width="16" height="16" style="left:1380px;top:860px"><rect width="16" height="16" rx="2" fill="#e6701c"/><path d="M4 12H12M6 9H11M10 3L7 8" stroke="#fff" stroke-width="1.300"/></svg>
<svg width="16" height="16" style="left:1404px;top:860px"><rect width="8" height="8" fill="#e8a020"/><rect x="8" width="8" height="8" fill="#2468b0"/><rect y="8" width="8" height="8" fill="#5aa030"/><rect x="8" y="8" width="8" height="8" fill="#c8302c"/></svg>
<svg width="16" height="10" style="left:1428px;top:863px"><rect width="14" height="8" fill="#58b048" stroke="#336"/><path d="M15 0V10" stroke="#333" stroke-width="2"/></svg>
<svg width="16" height="17" style="left:1452px;top:859px"><rect x="4" y="4" width="11" height="10" fill="#bbb" stroke="#555"/><rect x="1" y="1" width="5" height="7" fill="#fff" stroke="#555"/><rect x="2" y="12" width="6" height="4" fill="#fff" stroke="#555"/></svg>
<svg width="16" height="16" style="left:1476px;top:860px"><path d="M1 5H4L8 1V13L4 9H1Z" fill="#ddd" stroke="#777"/><circle cx="11" cy="11" r="4.500" fill="#d8343c"/><path d="M9 9L13 13M13 9L9 13" stroke="#fff"/></svg>
<div class="t" style="left:1520px;top:854px;width:29px;text-align:center;font-size:11.5px">12:29</div>
<div class="t" style="left:1505px;top:870px;width:58px;text-align:center;font-size:11.5px">04/12/2016</div>
<svg width="16" height="13" style="left:1569px;top:862px"><rect width="16" height="11" fill="#3c7ad0"/><rect y="9" width="16" height="3" fill="#223"/></svg>
</div></body></html>
